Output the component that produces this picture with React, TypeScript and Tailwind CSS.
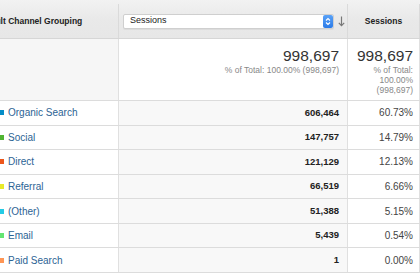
import React from 'react';

interface ChannelRow {
  name: string;
  color: string;
  sessions: string;
  share: string;
}

const rows: ChannelRow[] = [
  { name: 'Organic Search', color: '#058dc7', sessions: '606,464', share: '60.73%' },
  { name: 'Social', color: '#50b432', sessions: '147,757', share: '14.79%' },
  { name: 'Direct', color: '#ed561b', sessions: '121,129', share: '12.13%' },
  { name: 'Referral', color: '#e8ea2a', sessions: '66,519', share: '6.66%' },
  { name: '(Other)', color: '#24cbe5', sessions: '51,388', share: '5.15%' },
  { name: 'Email', color: '#64e572', sessions: '5,439', share: '0.54%' },
  { name: 'Paid Search', color: '#ff9655', sessions: '1', share: '0.00%' },
];

const SelectStepper: React.FC = () => (
  <span className="flex h-[13px] w-[10px] items-center justify-center rounded-[2px] bg-gradient-to-b from-[#5aa2f7] to-[#2a7ae8]">
    <svg width="6" height="9" viewBox="0 0 6 9" fill="none">
      <path d="M1 3.5 L3 1.5 L5 3.5" stroke="white" strokeWidth="1.1" />
      <path d="M1 5.5 L3 7.5 L5 5.5" stroke="white" strokeWidth="1.1" />
    </svg>
  </span>
);

const SortArrow: React.FC = () => (
  <svg width="7" height="11" viewBox="0 0 7 11" fill="none" className="ml-[4px]">
    <path d="M3.5 0.5 V9.5" stroke="#777" strokeWidth="1.2" />
    <path d="M0.8 6.8 L3.5 9.6 L6.2 6.8" stroke="#777" strokeWidth="1.2" />
  </svg>
);

export default function App() {
  return (
    <div className="w-[420px] h-[280px] overflow-hidden bg-white font-['Liberation_Sans',Arial,sans-serif] text-[#333]">
      {/* header */}
      <div className="flex h-[39px] border-b border-[#d6d6d6] bg-gradient-to-b from-[#f2f2f2] via-[#e9e9e9] to-[#e7e7e7] pt-[4px]">
        <div className="flex w-[119px] items-center overflow-hidden border-r border-[#dadada]">
          <span className="-ml-[23px] whitespace-nowrap text-[8.5px] font-bold text-[#222]">
            Default Channel Grouping
          </span>
        </div>
        <div className="flex w-[229px] items-center border-r border-[#dadada] pl-[4px]">
          <div className="flex h-[15px] w-[211px] items-center justify-between rounded-[2px] border border-[#cfcfcf] bg-white pl-[6px] shadow-[0_1px_0_rgba(0,0,0,0.05)]">
            <span className="text-[9px] text-[#222]">Sessions</span>
            <SelectStepper />
          </div>
          <SortArrow />
        </div>
        <div className="flex w-[72px] items-center justify-center border-r border-[#dadada]">
          <span className="text-[8.5px] font-bold text-[#222]">Sessions</span>
        </div>
      </div>

      {/* totals */}
      <div className="flex h-[62px] border-b border-[#dcdcdc]">
        <div className="w-[119px] border-r border-[#e0e0e0] bg-[#f6f6f6]" />
        <div className="flex w-[229px] flex-col items-end border-r border-[#e0e0e0] pr-[8px] pt-[8px]">
          <span className="text-[15.5px] leading-[18px] text-[#333]">998,697</span>
          <span className="text-[8.5px] leading-[11px] text-[#888]">% of Total: 100.00% (998,697)</span>
        </div>
        <div className="flex w-[72px] flex-col items-end border-r border-[#e0e0e0] pr-[6px] pt-[8px]">
          <span className="text-[15.5px] leading-[18px] text-[#333]">998,697</span>
          <span className="text-[8.5px] leading-[10px] text-[#888] text-right">
            % of Total:
            <br />
            100.00%
            <br />
            (998,697)
          </span>
        </div>
      </div>

      {/* data rows */}
      {rows.map((row) => (
        <div key={row.name} className="flex h-[24.57px] border-b border-[#dcdcdc]">
          <div className="flex w-[119px] items-center border-r border-[#e0e0e0] bg-white">
            <span className="h-[5px] w-[4px] shrink-0" style={{ backgroundColor: row.color }} />
            <span className="ml-[4px] text-[10px] text-[#2c6394]">{row.name}</span>
          </div>
          <div className="flex w-[229px] items-center justify-end border-r border-[#e0e0e0] bg-[#f8f8f8] pr-[8px]">
            <span className="text-[9.5px] font-bold text-[#222]">{row.sessions}</span>
          </div>
          <div className="flex w-[72px] items-center justify-end border-r border-[#e0e0e0] pr-[6px]">
            <span className="text-[10px] text-[#444]">{row.share}</span>
          </div>
        </div>
      ))}
    </div>
  );
}
